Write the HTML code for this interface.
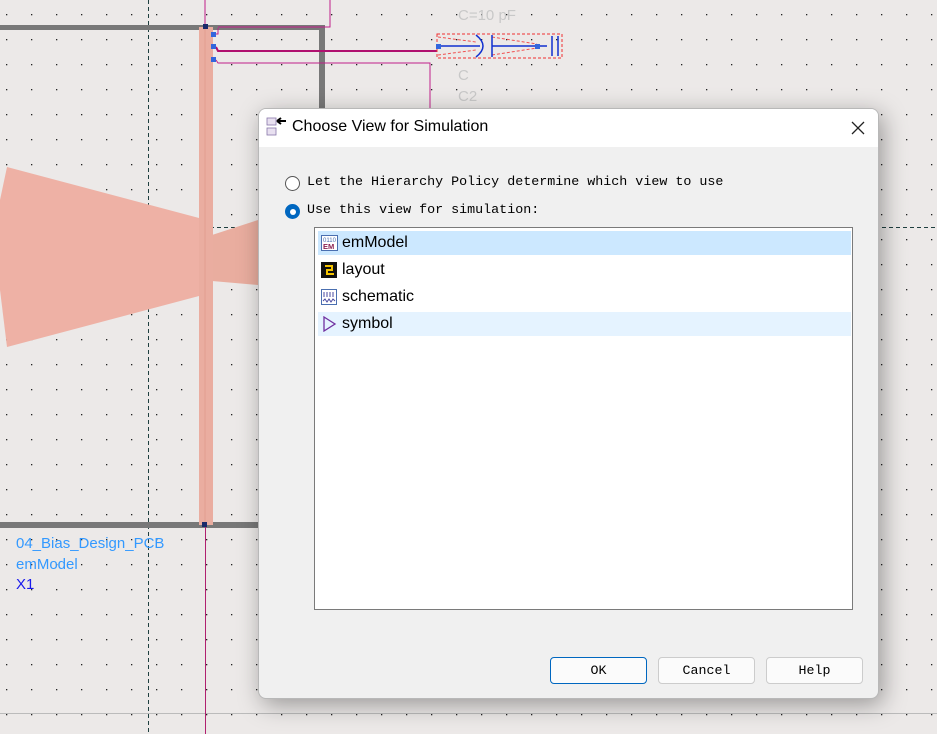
<!DOCTYPE html>
<html><head><style>
body{margin:0;width:937px;height:734px;overflow:hidden;background:#ece9e8;position:relative;font-family:"Liberation Sans",sans-serif}
.dlg{position:absolute;left:258px;top:108px;width:621px;height:591px;background:#f0f0f0;border:1px solid #b8b8b8;border-radius:8px;box-shadow:4px 6px 24px rgba(0,0,0,.35);overflow:hidden;box-sizing:border-box}
.tb{height:38px;background:#fff;position:relative}
.tt{position:absolute;left:33px;top:9px;font-size:16px;color:#000}
.mono{font-family:"Liberation Mono",monospace;font-size:13.35px;color:#000;position:absolute}
.rad{position:absolute;width:13px;height:13px;border-radius:50%;border:1px solid #555;background:#fff}
.list{position:absolute;left:55px;top:118px;width:539px;height:383px;background:#fff;border:1px solid #7a7a7a;box-sizing:border-box}
.row{position:absolute;left:3px;width:533px;height:24px;font-size:16px;line-height:24px}
.row span{position:absolute;left:24px}
.row svg{position:absolute;left:3px;top:4px}
.btn{position:absolute;top:548px;width:97px;height:27px;border:1px solid #ccc;border-radius:4px;background:#fbfbfb;box-sizing:border-box;text-align:center;line-height:25px;font-family:"Liberation Mono",monospace;font-size:13.3px}
</style></head><body>
<svg width="937" height="734" style="position:absolute;left:0;top:0">
<defs><pattern id="d" x="6" y="14" width="25" height="25" patternUnits="userSpaceOnUse"><rect width="1.3" height="1.3" fill="#222"/></pattern></defs>
<rect width="937" height="734" fill="url(#d)"/>
<line x1="148.5" y1="0" x2="148.5" y2="734" stroke="#1f3f3f" stroke-dasharray="4,3"/>
<line x1="0" y1="227.5" x2="937" y2="227.5" stroke="#1f3f3f" stroke-dasharray="4,3"/>
<line x1="0" y1="713.5" x2="937" y2="713.5" stroke="#bbb"/>
<polygon points="7,167 199,218 199,296 7,347 0,290 0,200" fill="#eeb1a5"/>
<polygon points="212,235 258,220 258,285 212,281" fill="#e9ad9f"/>
<rect x="0" y="25" width="325" height="5" fill="#787878"/>
<rect x="319" y="25" width="6" height="83" fill="#787878"/>
<rect x="0" y="522" width="258" height="6" fill="#787878"/>
<rect x="199" y="27" width="14" height="498" fill="#eaada0"/>
<line x1="205" y1="27" x2="205" y2="525" stroke="#e09a8c" stroke-width="0.8"/>
<line x1="205.5" y1="525" x2="205.5" y2="734" stroke="#b0206f"/>
<rect x="202" y="522" width="5" height="5" fill="#1a2a6a"/>
<line x1="205" y1="0" x2="205" y2="27" stroke="#c0208a"/>
<polyline points="330,0 330,27 218,27" fill="none" stroke="#c0208a"/>
<polyline points="216,34 218,34 218,28" fill="none" stroke="#c0208a"/>
<polyline points="216,47 218,51 437,51" fill="none" stroke="#b0106f" stroke-width="2"/>
<polyline points="216,60 218,63 430,63 430,108" fill="none" stroke="#c0208a"/>
<rect x="211" y="32" width="5" height="5" fill="#3366dd"/>
<rect x="211" y="44" width="5" height="5" fill="#3366dd"/>
<rect x="211" y="57" width="5" height="5" fill="#3366dd"/>
<rect x="203" y="24" width="5" height="5" fill="#1a2a6a"/>
<rect x="437" y="34" width="125" height="24" fill="none" stroke="#f03030" stroke-dasharray="3,2"/>
<path d="M438 37L476 42M438 55L476 50M492 37L537 44M492 55L537 48" stroke="#f05050" stroke-dasharray="3,2"/>
<line x1="438" y1="46" x2="480" y2="46" stroke="#1030d0" stroke-width="1.5"/>
<path d="M476 35 Q490 46 476 57" fill="none" stroke="#1030d0" stroke-width="1.5"/>
<line x1="492" y1="35" x2="492" y2="57" stroke="#1030d0" stroke-width="1.5"/>
<line x1="492" y1="46" x2="547" y2="46" stroke="#1030d0" stroke-width="1.5"/>
<line x1="552" y1="36" x2="552" y2="56" stroke="#1030d0" stroke-width="1.5"/>
<line x1="558" y1="36" x2="558" y2="56" stroke="#1030d0" stroke-width="1.5"/>
<rect x="436" y="44" width="5" height="5" fill="#3366dd"/>
<rect x="535" y="44" width="5" height="5" fill="#3366dd"/>
<text x="458" y="20" font-size="15" fill="#c8c8c8" font-family="Liberation Sans">C=10 pF</text>
<text x="458" y="80" font-size="15" fill="#c8c8c8" font-family="Liberation Sans">C</text>
<text x="458" y="101" font-size="15" fill="#c8c8c8" font-family="Liberation Sans">C2</text>
<text x="16" y="548" font-size="15" fill="#3399ff" font-family="Liberation Sans">04_Bias_Design_PCB</text>
<text x="16" y="569" font-size="15" fill="#3399ff" font-family="Liberation Sans">emModel</text>
<text x="16" y="589" font-size="15" fill="#1a1aee" font-family="Liberation Sans">X1</text>
</svg>
<div class="dlg">
<div class="tb">
<svg width="24" height="24" style="position:absolute;left:7px;top:7px"><rect x="1" y="2" width="9" height="7" fill="#e8e0f0" stroke="#8877aa" stroke-width="0.8"/><rect x="1" y="12" width="9" height="7" fill="#e8e0f0" stroke="#8877aa" stroke-width="0.8"/><path d="M11 5h9M11 5l4-3M11 5l4 3" stroke="#000" stroke-width="2"/></svg>
<div class="tt">Choose View for Simulation</div>
<svg width="14" height="14" style="position:absolute;left:592px;top:12px"><path d="M1 1L13 13M13 1L1 13" stroke="#222" stroke-width="1.3"/></svg>
</div>
<div class="rad" style="left:26px;top:67px"></div>
<div class="mono" style="left:48px;top:66px">Let the Hierarchy Policy determine which view to use</div>
<div class="rad" style="left:26px;top:95px;border:1px solid #0067c0;background:#0067c0"><div style="position:absolute;left:3.5px;top:3.5px;width:6px;height:6px;border-radius:50%;background:#fff"></div></div>
<div class="mono" style="left:48px;top:94px">Use this view for simulation:</div>
<div class="list">
<div class="row" style="top:3px;background:#cce8ff"><svg width="17" height="16"><rect x=".5" y=".5" width="16" height="15" fill="#fff" stroke="#4a6fb0"/><text x="2" y="7" font-size="6" fill="#4a6fb0">0110</text><text x="2" y="14" font-size="7.5" fill="#8a2050" font-weight="bold">EM</text></svg><span>emModel</span></div>
<div class="row" style="top:30px"><svg width="17" height="16"><rect width="16" height="16" fill="#111"/><path d="M4 4h7v4H6v4h7" fill="none" stroke="#f5c400" stroke-width="2"/></svg><span>layout</span></div>
<div class="row" style="top:57px"><svg width="17" height="16"><rect x=".5" y=".5" width="15" height="15" fill="#fff" stroke="#4a6fb0"/><path d="M3 3v5M6 3v5M9 3v5M12 3v5M2 12l2-2 2 3 2-3 2 3 2-3 2 2" fill="none" stroke="#4a4aa0"/></svg><span>schematic</span></div>
<div class="row" style="top:84px;background:#e5f3ff"><svg width="17" height="16"><path d="M3 1l11 7-11 7z" fill="none" stroke="#7030a0" stroke-width="1.3"/></svg><span>symbol</span></div>
</div>
<div class="btn" style="left:291px;border:1px solid #0067c0">OK</div>
<div class="btn" style="left:399px">Cancel</div>
<div class="btn" style="left:507px">Help</div>
</div>
</body></html>
